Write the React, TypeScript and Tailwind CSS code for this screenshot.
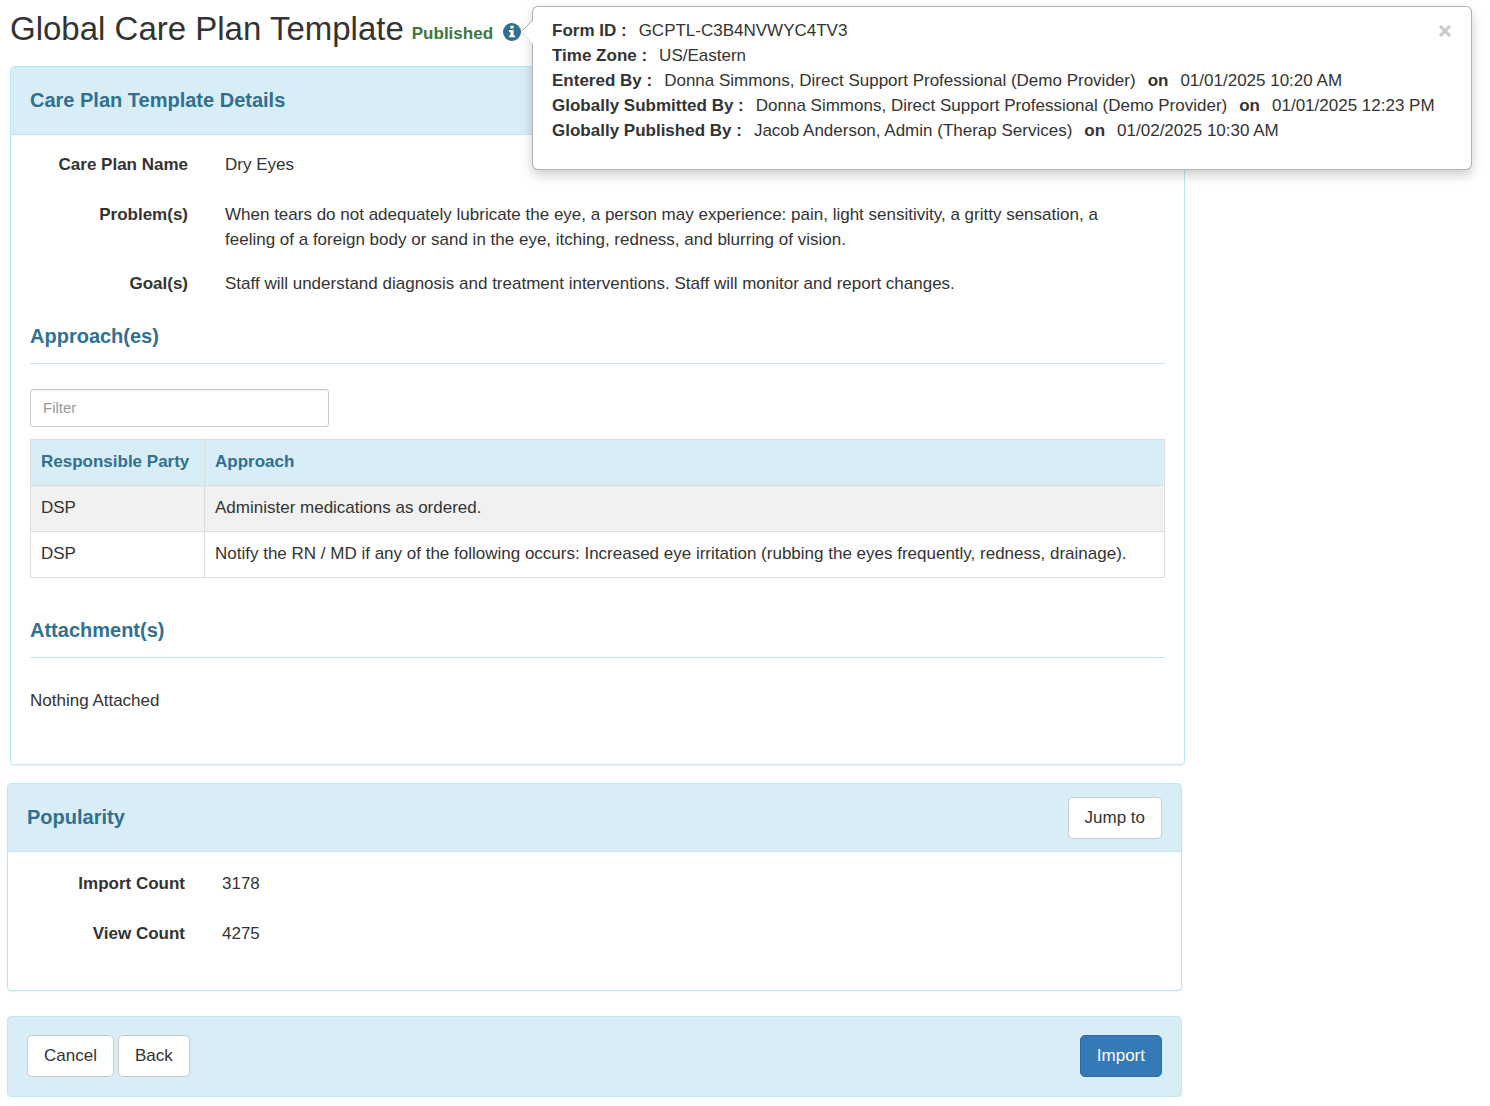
import type { ReactNode } from "react";

const approaches = [
  { party: "DSP", approach: "Administer medications as ordered." },
  {
    party: "DSP",
    approach:
      "Notify the RN / MD if any of the following occurs: Increased eye irritation (rubbing the eyes frequently, redness, drainage).",
  },
];

const formInfo = [
  { label: "Form ID", value: "GCPTL-C3B4NVWYC4TV3" },
  { label: "Time Zone", value: "US/Eastern" },
  {
    label: "Entered By",
    value: "Donna Simmons, Direct Support Professional (Demo Provider)",
    on: "01/01/2025 10:20 AM",
  },
  {
    label: "Globally Submitted By",
    value: "Donna Simmons, Direct Support Professional (Demo Provider)",
    on: "01/01/2025 12:23 PM",
  },
  {
    label: "Globally Published By",
    value: "Jacob Anderson, Admin (Therap Services)",
    on: "01/02/2025 10:30 AM",
  },
];

function InfoIcon() {
  return (
    <svg viewBox="0 0 18 18" className="block size-[18px]" aria-hidden="true">
      <circle cx="9" cy="9" r="9" fill="#31708f" />
      <path d="M7.4 2.8h3.2v2.7H7.4z M6 7h4.6v5.4H12v1.9H6v-1.9h1.4V8.9H6z" fill="#fff" />
    </svg>
  );
}

function Popover() {
  return (
    <div
      role="dialog"
      aria-label="Form information"
      className="absolute -top-[17px] left-full z-10 ml-[11px] min-w-[940px] rounded-md border border-black/30 bg-white px-[19px] pt-[11px] pb-[26px] whitespace-nowrap shadow-[0_5px_12px_rgba(0,0,0,0.2)]"
    >
      <svg viewBox="0 0 13 26" className="absolute top-3 -left-[12px] h-[26px] w-[13px]" aria-hidden="true">
        <path d="M13 0 0 13l13 13z" fill="#fff" />
        <path d="M12 1 0.5 12.5" stroke="#aaa" fill="none" />
        <path d="M0.5 13.5 12 25" stroke="#ddd" fill="none" />
      </svg>
      <button type="button" aria-label="Close" className="absolute top-[18px] right-5">
        <svg viewBox="0 0 12 12" className="block size-3" aria-hidden="true">
          <path d="M1 1l10 10M11 1l-10 10" stroke="#ccc" strokeWidth="3.2" />
        </svg>
      </button>
      {formInfo.map((row) => (
        <div key={row.label}>
          <b>{row.label} :</b>
          <span className="ml-3">{row.value}</span>
          {row.on && (
            <>
              <b className="mx-3">on</b>
              <span>{row.on}</span>
            </>
          )}
        </div>
      ))}
    </div>
  );
}

function Field({ label, children }: { label: string; children: ReactNode }) {
  return (
    <div className="flex gap-[37px]">
      <dt className="w-[158px] shrink-0 text-right font-bold">{label}</dt>
      <dd className="min-w-0 flex-1 pr-[30px]">{children}</dd>
    </div>
  );
}

function PanelHeader({ title, children }: { title: string; children?: ReactNode }) {
  return (
    <div className="flex h-[68px] items-center justify-between border-b border-[#bce8f1] bg-[#d9edf7] px-[19px]">
      <h2 className="text-[20px] font-bold text-[#31708f]">{title}</h2>
      {children}
    </div>
  );
}

function SectionTitle({ children }: { children: ReactNode }) {
  return (
    <h3 className="border-b border-[#bce8f1] pb-[14px] text-[20px] leading-[25px] font-bold text-[#31708f]">
      {children}
    </h3>
  );
}

const panel = "overflow-hidden rounded border border-[#bce8f1] bg-white shadow-[0_1px_1px_rgba(0,0,0,0.05)]";
const button = "h-[42px] rounded-[5px] border px-4 pb-px";
const cell = "border border-[#ddd] px-[10px] pt-[9px] pb-[11px]";

export default function App() {
  return (
    <main className="min-h-screen bg-white px-[7px] pb-[9px] font-['Liberation_Sans',Arial,sans-serif] text-[17px] leading-[25px] text-[#333]">
      <header className="flex items-center pt-[6px] pl-[3px]">
        <h1 className="text-[33px] leading-[46px]">Global Care Plan Template</h1>
        <span className="mt-2 ml-2 font-bold text-[#3c763d]">Published</span>
        <div className="relative mt-[6px] ml-[10px]">
          <button type="button" aria-label="Form information" className="block">
            <InfoIcon />
          </button>
          <Popover />
        </div>
      </header>

      <div className="max-w-[1178px]">
        <section className={`${panel} mt-[14px] ml-[3px]`}>
          <PanelHeader title="Care Plan Template Details" />
          <div className="px-[19px] pt-[17px] pb-[51px]">
            <dl className="flex flex-col">
              <Field label="Care Plan Name">Dry Eyes</Field>
              <div className="mt-[25px]">
                <Field label="Problem(s)">
                  When tears do not adequately lubricate the eye, a person may experience: pain, light sensitivity, a
                  gritty sensation, a feeling of a foreign body or sand in the eye, itching, redness, and blurring of
                  vision.
                </Field>
              </div>
              <div className="mt-[19px]">
                <Field label="Goal(s)">
                  Staff will understand diagnosis and treatment interventions. Staff will monitor and report changes.
                </Field>
              </div>
            </dl>

            <div className="mt-7">
              <SectionTitle>Approach(es)</SectionTitle>
            </div>
            <input
              type="text"
              aria-label="Filter"
              placeholder="Filter"
              className="mt-[25px] block h-[38px] w-[299px] rounded-[3px] border border-[#ccc] px-3 pb-px text-[15px] shadow-[inset_0_1px_1px_rgba(0,0,0,0.075)] placeholder:text-[#999]"
            />
            <table className="mt-3 w-full border-collapse">
              <thead>
                <tr className="bg-[#d9edf7] text-left text-[#31708f]">
                  <th className={`${cell} w-[174px] whitespace-nowrap`}>Responsible Party</th>
                  <th className={cell}>Approach</th>
                </tr>
              </thead>
              <tbody>
                {approaches.map((row) => (
                  <tr key={row.approach} className="odd:bg-[#f1f1f1]">
                    <td className={cell}>{row.party}</td>
                    <td className={cell}>{row.approach}</td>
                  </tr>
                ))}
              </tbody>
            </table>

            <div className="mt-10">
              <SectionTitle>Attachment(s)</SectionTitle>
            </div>
            <p className="mt-[30px]">Nothing Attached</p>
          </div>
        </section>
      </div>

      <div className="max-w-[1175px]">
        <section className={`${panel} mt-[18px]`}>
          <PanelHeader title="Popularity">
            <button type="button" className={`${button} border-[#ccc] bg-white`}>
              Jump to
            </button>
          </PanelHeader>
          <dl className="flex flex-col gap-[25px] px-[19px] pt-[19px] pb-11">
            <Field label="Import Count">3178</Field>
            <Field label="View Count">4275</Field>
          </dl>
        </section>

        <footer className="mt-[25px] flex items-center justify-between rounded border border-[#bce8f1] bg-[#d9edf7] px-[19px] pt-[18px] pb-[19px]">
          <div className="flex gap-1">
            <button type="button" className={`${button} border-[#ccc] bg-white`}>
              Cancel
            </button>
            <button type="button" className={`${button} border-[#ccc] bg-white`}>
              Back
            </button>
          </div>
          <button type="button" className={`${button} border-[#2e6da4] bg-[#337ab7] text-white`}>
            Import
          </button>
        </footer>
      </div>
    </main>
  );
}
